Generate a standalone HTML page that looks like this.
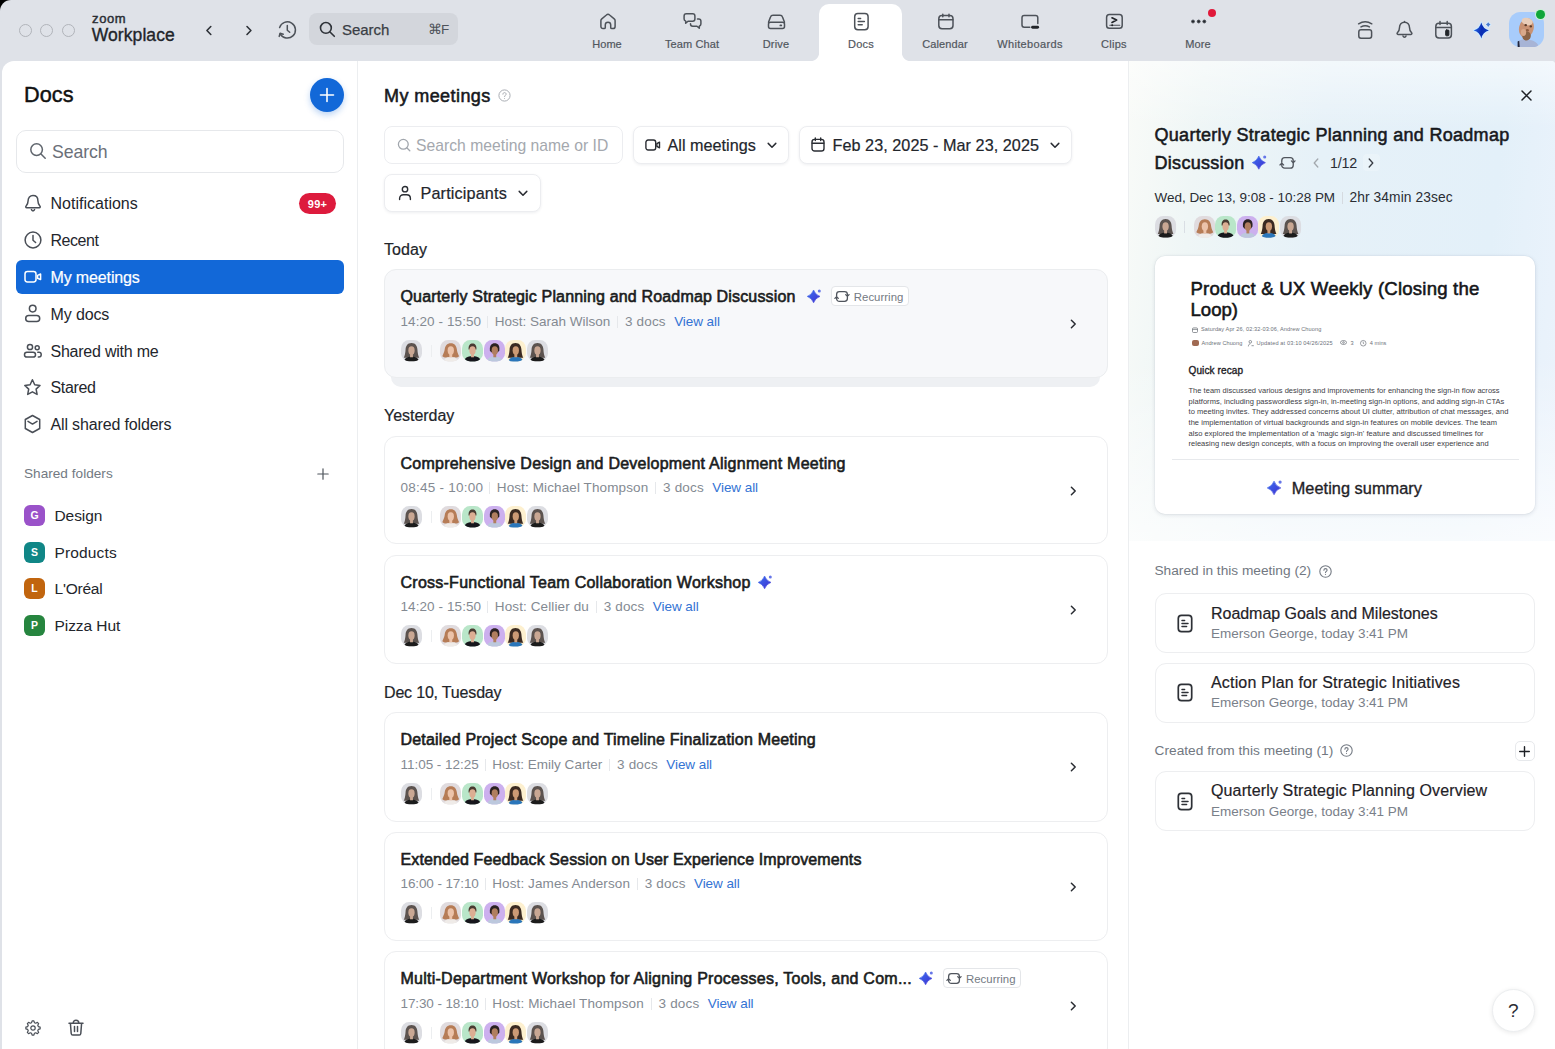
<!DOCTYPE html>
<html lang="en">
<head>
<meta charset="utf-8">
<title>Zoom Workplace - Docs</title>
<style>
*{box-sizing:border-box;margin:0;padding:0}
html,body{width:1555px;height:1049px;overflow:hidden}
body{position:relative;background:#dfe2e8;font-family:"Liberation Sans",Arial,sans-serif;color:#1b1e23;-webkit-font-smoothing:antialiased}
.a{position:absolute}
.t{position:absolute;white-space:nowrap;line-height:20px;height:20px}
svg{position:absolute;overflow:visible}
.ic{fill:none;stroke:#4a4f57;stroke-width:1.5;stroke-linecap:round;stroke-linejoin:round}
/* top bar */
#corner{left:0;top:0;width:14px;height:14px;background:#000}
#corner i{position:absolute;left:0;top:0;width:28px;height:28px;border-radius:11px;background:#dfe2e8}
.tl{width:13px;height:13px;border-radius:50%;border:1.5px solid #b1b4ba;top:23.5px}
#sbox{left:309px;top:13px;width:149px;height:32px;border-radius:8px;background:#d3d6dc}
.nav{top:37px;width:90px;text-align:center;font-size:11px;color:#51565d;-webkit-text-stroke:.2px #51565d;line-height:14px;height:14px}
#tab{left:819.2px;top:4px;width:83.2px;height:58px;background:#fff;border-radius:10px 10px 0 0}
/* content */
#content{left:2.3px;top:60.7px;width:1552.7px;height:990px;background:#fff;border-radius:12px 4px 0 0;overflow:hidden}
#side{left:0;top:0;width:355px;height:990px;border-right:1px solid #e9ebee}
#mid{left:355px;top:0;width:771px;height:990px}
#right{left:1126px;top:0;width:426px;height:990px;border-left:1px solid #e9ebee}
.si{left:50.5px;font-size:16px;color:#23262c}
.sf{left:54.5px;font-size:15.5px;color:#23262c}
.fi{left:24px;width:21px;height:21px;border-radius:6px;color:#fff;font-size:10.5px;font-weight:bold;text-align:center;line-height:21px}
.fb{height:38px;border:1px solid #ecedf0;border-radius:8px;background:#fff;box-shadow:0 1px 3px rgba(20,30,50,.07)}
.ft{font-size:16.2px;color:#23262c;-webkit-text-stroke:.2px #23262c}
.chev{fill:none;stroke:#2a2d33;stroke-width:1.5;stroke-linecap:round;stroke-linejoin:round}
.sl{left:384px;font-size:16px;color:#22252a;-webkit-text-stroke:.2px #22252a}
.card{left:384px;width:723.5px;border:1px solid #edeef0;border-radius:12px;background:#fff}
.card.sel{background:#f7f8fa;border-color:#ebedef}
.ct{left:400.5px;font-size:16px;color:#1a1c20;-webkit-text-stroke:.6px #1a1c20}
.rb{width:78px;height:20px;border:1px solid #e4e6e9;border-radius:4px;background:#fff}
.mt{left:400.5px;font-size:13.5px;color:#848a92}
.mt span,.mt b,.mt i{display:inline-block;vertical-align:top}
.mt i{width:1px;height:12px;background:#e6e8eb;margin:4px 6.3px 0 6.3px}
.mt b{font-weight:normal;color:#3373d4;margin-left:8.4px}
.mt i+span+i{margin-left:6.9px;margin-right:6.9px}
#rbg{background:linear-gradient(to bottom,rgba(255,255,255,.5) 0,rgba(255,255,255,0) 14%,rgba(255,255,255,0) 62%,rgba(255,255,255,.72) 100%),linear-gradient(96deg,#f9fbf8 0%,#eff6f6 16%,#e6f1f8 42%,#e3f0f9 80%,#ecf3fc 100%)}
.rt{left:1154.5px;font-size:18px;color:#17191d;-webkit-text-stroke:.55px #17191d}
.pt{left:1190.5px;font-size:18.6px;color:#141518;-webkit-text-stroke:.55px #141518}
.tiny{font-size:5.6px;color:#6d727a}
.para{left:1188.5px;font-size:7.5px;color:#3d4046}
.sh{left:1154.5px;font-size:13.7px;color:#727881}
.di{left:1155px;width:380px;height:60px;border:1px solid #edeef0;border-radius:11px;background:#fff}
.dt{left:1211px;font-size:16px;color:#1f2227;-webkit-text-stroke:.2px #1f2227}
.ds{left:1211px;font-size:13.5px;color:#7a8089}
.tb{stroke:#4d5259}
</style>
</head>
<body>
<svg width="0" height="0" style="left:0;top:0"><defs><filter id="avb" x="-10%" y="-10%" width="120%" height="120%"><feGaussianBlur stdDeviation=".45"/></filter><filter id="avb2" x="-20%" y="-20%" width="140%" height="140%"><feGaussianBlur stdDeviation=".7"/></filter></defs></svg>
<div class="a" id="corner"><i></i></div>
<div class="a tl" style="left:18.5px"></div><div class="a tl" style="left:40px"></div><div class="a tl" style="left:62px"></div>
<div class="t" style="letter-spacing:0.626px;left:92px;top:8.600px;font-size:13px;color:#2a2d33;-webkit-text-stroke:.45px #2a2d33">zoom</div>
<div class="t" style="letter-spacing:0.071px;left:91.800px;top:25px;font-size:17.5px;color:#22252a;-webkit-text-stroke:.35px #22252a">Workplace</div>
<div class="a" id="sbox"></div>
<div class="t" style="letter-spacing:-0.039px;left:342px;top:19.500px;font-size:15px;color:#3a3e45;-webkit-text-stroke:.25px #3a3e45">Search</div>
<div class="t" style="letter-spacing:-0.525px;left:427.500px;top:19.500px;font-size:13.500px;color:#4d5259">⌘F</div>
<div class="a" id="tab"></div>
<div class="a" style="left:811.200px;top:52.500px;width:8px;height:8px;background:radial-gradient(circle at 0 0,rgba(255,255,255,0) 7.600px,#fff 8.400px)"></div>
<div class="a" style="left:902.400px;top:52.500px;width:8px;height:8px;background:radial-gradient(circle at 100% 0,rgba(255,255,255,0) 7.600px,#fff 8.400px)"></div>
<div class="t nav" style="letter-spacing:0.039px;left:562px">Home</div>
<div class="t nav" style="letter-spacing:0.111px;left:647px">Team Chat</div>
<div class="t nav" style="letter-spacing:0.206px;left:731px">Drive</div>
<div class="t nav" style="letter-spacing:0.184px;left:816px">Docs</div>
<div class="t nav" style="letter-spacing:0.132px;left:900px">Calendar</div>
<div class="t nav" style="letter-spacing:0.349px;left:985px">Whiteboards</div>
<div class="t nav" style="letter-spacing:0.269px;left:1069px">Clips</div>
<div class="t nav" style="letter-spacing:0.109px;left:1153px">More</div>

<!-- TOPICONS -->
<svg class="ic tb" style="left:205.300px;top:24.500px" width="8" height="11" viewBox="0 0 8 11"><path d="M5.800 1.500L1.900 5.500l3.900 4" stroke="#2e3238" stroke-width="1.600"/></svg>
<svg class="ic tb" style="left:244.600px;top:24.500px" width="8" height="11" viewBox="0 0 8 11"><path d="M2 1.500L5.900 5.500 2 9.500" stroke="#2e3238" stroke-width="1.600"/></svg>
<svg class="ic tb" style="left:277px;top:20px" width="20" height="20" viewBox="0 0 20 20"><path d="M3.200 13.800A8.100 8.100 0 1 0 2.600 7.600" /><path d="M2.200 16.400l.9-3.200 3.100 1.100" /><path d="M10.300 5.600v4.600l2.400 2.100"/></svg>
<svg class="ic tb" style="left:318.500px;top:21px" width="17" height="17" viewBox="0 0 17 17"><circle cx="6.900" cy="6.900" r="5.400" stroke="#2e3238" stroke-width="1.600"/><path d="M11 11l4.300 4.300" stroke="#2e3238" stroke-width="1.600"/></svg>
<!-- nav icons -->
<svg class="ic tb" style="left:598.700px;top:13px" width="18" height="17" viewBox="0 0 18 17"><path d="M1.900 7.700c0-.8.300-1.400.9-1.900l4.600-3.800c.9-.8 2.300-.8 3.200 0l4.600 3.800c.6.500.9 1.100.9 1.900v5.800c0 1.200-.9 2.100-2.100 2.100h-1.100c-.7 0-1.200-.5-1.200-1.200v-2.600c0-1.500-1.100-2.600-2.700-2.600s-2.700 1.100-2.700 2.600v2.600c0 .7-.5 1.200-1.200 1.200h-1.100c-1.200 0-2.100-.9-2.100-2.100z"/></svg>
<svg class="ic tb" style="left:682px;top:12px" width="21" height="19" viewBox="0 0 21 19"><path d="M4.300 1.800h6.400c1.300 0 2.200.9 2.200 2.200v3c0 1.300-.9 2.200-2.200 2.200H6l-2.300 2V9.100C2.800 8.800 2.100 8 2.100 7V4c0-1.300.9-2.200 2.200-2.200z"/><path d="M15.500 6.900h1.200c1.300 0 2.200.9 2.200 2.200v3c0 1-.7 1.800-1.600 2.100v2.100l-2.300-2h-4.300c-1.300 0-2.200-.9-2.200-2.200v-.4"/></svg>
<svg class="ic tb" style="left:767.200px;top:13.500px" width="19" height="16" viewBox="0 0 19 16"><path d="M1.500 8.200l2-5.300C3.900 1.700 4.800 1.200 6 1.200h7c1.200 0 2.100.5 2.500 1.700l2 5.300"/><rect x="1.500" y="8.200" width="16" height="6.300" rx="2"/><path d="M13.400 11.400h.8" stroke-width="1.900"/></svg>
<svg class="ic tb" style="left:853px;top:12px" width="17" height="19" viewBox="0 0 17 19"><rect x="1.700" y="1.500" width="13.400" height="16.200" rx="3.200"/><path d="M5.200 6.400h2.400M5.200 9.600h6.200M5.200 12.800h4" stroke-width="1.500"/></svg>
<svg class="ic tb" style="left:936.500px;top:13px" width="18" height="17" viewBox="0 0 18 17"><rect x="1.800" y="2.600" width="14.200" height="13.200" rx="3.200"/><path d="M2 6.800h13.800M5.800 1.200v2.600M12 1.200v2.600"/></svg>
<svg class="ic tb" style="left:1020px;top:13.500px" width="20" height="16" viewBox="0 0 20 16"><path d="M9.800 13.200H4.200c-1.300 0-2.200-.9-2.200-2.200V3.800c0-1.300.9-2.200 2.200-2.200h11.400c1.300 0 2.200.9 2.200 2.200v5.800"/><path d="M12.600 13.300h5" stroke-width="2.900" stroke="#22252a"/></svg>
<svg class="ic tb" style="left:1105px;top:13px" width="19" height="17" viewBox="0 0 19 17"><rect x="1.600" y="1.600" width="15.600" height="13.600" rx="2.800"/><path d="M7 4.800l4.600 2.300L7 9.400" stroke="#22252a" stroke-width="1.700"/><path d="M4.800 12.300h10" stroke-width="1.100"/><circle cx="7.200" cy="12.300" r="1" fill="#22252a" stroke="none"/></svg>
<svg class="tb" style="left:1190px;top:18px" width="18" height="7" viewBox="0 0 18 7"><circle cx="3" cy="3.500" r="1.450" fill="#22252a"/><circle cx="8.700" cy="3.500" r="1.450" fill="#22252a"/><circle cx="14.300" cy="3.500" r="1.450" fill="#22252a"/></svg>
<div class="a" style="left:1207.500px;top:8.600px;width:8.400px;height:8.400px;border-radius:50%;background:#e0193a"></div>
<!-- right icons -->
<svg class="ic tb" style="left:1356px;top:20px" width="19" height="20" viewBox="0 0 19 20"><rect x="2.800" y="9.800" width="12.800" height="8.400" rx="2.200"/><path d="M5 6.900c2.600-1.500 5.800-1.500 8.400 0M2.600 3.800c4-2.500 9.200-2.500 13.200 0"/></svg>
<svg class="ic tb" style="left:1395px;top:20px" width="19" height="20" viewBox="0 0 19 20"><path d="M9.500 2.200c-3.100 0-5 2.200-5 5.200 0 2.600-.7 4-2.100 5.400-.6.600-.3 1.600.6 1.600h13c.9 0 1.200-1 .6-1.600-1.400-1.400-2.100-2.800-2.100-5.400 0-3-1.900-5.200-5-5.200z"/><path d="M8 15.900c.3.900.8 1.300 1.500 1.300s1.200-.4 1.500-1.300"/><path d="M9.500 1.400v.8"/></svg>
<svg class="ic tb" style="left:1433.500px;top:20px" width="19" height="20" viewBox="0 0 19 20"><rect x="1.800" y="3.200" width="15.600" height="14.800" rx="3.200"/><path d="M2 7.600h15.200M6 1.600v3M13.200 1.600v3"/><rect x="11.700" y="10" width="3.200" height="5.800" rx=".8" fill="#22252a" stroke="#22252a" stroke-width="1"/></svg>
<svg class="tb" style="left:1473px;top:22px" width="20" height="20" viewBox="0 0 20 20"><defs><linearGradient id="tsg" x1="0" y1=".4" x2="1" y2=".6"><stop offset="0" stop-color="#2a6be6"/><stop offset=".5" stop-color="#0a2db4"/><stop offset="1" stop-color="#0b3cc0"/></linearGradient></defs><path d="M8.30 0.60Q9.82 6.92 15.90 8.50Q9.82 10.08 8.30 16.40Q6.78 10.08 0.70 8.50Q6.78 6.92 8.30 0.60z" fill="#cdeaff" stroke="#cdeaff" stroke-width="2.200" stroke-linejoin="round"/><path d="M15.20 0.30Q15.94 1.86 17.50 2.60Q15.94 3.34 15.20 4.90Q14.46 3.34 12.90 2.60Q14.46 1.86 15.20 0.30z" fill="#cdeaff" stroke="#d5ecff" stroke-width="1.800" stroke-linejoin="round"/><path d="M8.30 0.60Q9.82 6.92 15.90 8.50Q9.82 10.08 8.30 16.40Q6.78 10.08 0.70 8.50Q6.78 6.92 8.30 0.60z" fill="url(#tsg)" stroke="none"/><path d="M15.20 0.30Q15.94 1.86 17.50 2.60Q15.94 3.34 15.20 4.90Q14.46 3.34 12.90 2.60Q14.46 1.86 15.20 0.30z" fill="#4a7bd0" stroke="none"/></svg>
<div class="a" style="left:1508.500px;top:12.400px;width:35px;height:35px;border-radius:11.500px;background:#a8ccfb;overflow:hidden">
 <svg style="left:0;top:0" width="35" height="35" viewBox="0 0 35 35"><g filter="url(#avb2)"><path d="M8.500 36l.4-6c2-2.200 5-3 8.500-2.500 5 .3 9 1.500 11.500 5V36z" fill="#a7b4d6"/><path d="M8.600 36V29.500l1.600-.8.600 7.300z" fill="#20253a"/><ellipse cx="17.400" cy="16" rx="7.300" ry="10" fill="#c99273" transform="rotate(14 17.400 16)"/><ellipse cx="18.200" cy="9.500" rx="5.600" ry="3.600" fill="#e8cdb9" transform="rotate(14 18.200 9.500)"/><ellipse cx="17.600" cy="24" rx="4.200" ry="4.600" fill="#8a6444" transform="rotate(14 17.600 24)"/><ellipse cx="16.700" cy="13.200" rx="1.300" ry="1.100" fill="#5a3a28"/><ellipse cx="21.800" cy="14.400" rx="1.300" ry="1.100" fill="#5a3a28"/><ellipse cx="18.300" cy="18.300" rx="1.600" ry="1.300" fill="#8d5d40"/><ellipse cx="14.500" cy="20.500" rx="2.600" ry="3.400" fill="#d9a98a"/></g></svg>
</div>
<div class="a" style="left:1535.300px;top:9.400px;width:10.800px;height:10.800px;border-radius:50%;background:#c9f2d6"></div>
<div class="a" style="left:1536.300px;top:10.400px;width:8.800px;height:8.800px;border-radius:50%;background:#10a63a"></div>
<!-- /TOPICONS -->
<div class="a" id="content">

 <div class="a" id="pg" style="left:-2.3px;top:-60.7px;width:1555px;height:1049px">
 <div class="a" style="left:357px;top:61px;width:1px;height:990px;background:#eceef0"></div>
 <div class="a" style="left:1128px;top:61px;width:1px;height:990px;background:#eceef0"></div>
 <!-- SIDEBAR -->
 <div class="t" style="letter-spacing:0.02px;left:24px;top:85px;font-size:21.7px;-webkit-text-stroke:.45px #111;color:#111">Docs</div>
 <div class="a" style="left:310px;top:78px;width:34px;height:34px;border-radius:50%;background:#1268d8;box-shadow:0 3px 6px rgba(18,104,216,.28)"></div>
 <svg style="left:319px;top:87px" width="16" height="16" viewBox="0 0 16 16"><path d="M8 1.5v13M1.5 8h13" stroke="#fff" stroke-width="1.6" stroke-linecap="round"/></svg>
 <div class="a" style="left:16px;top:130px;width:328px;height:43px;border:1px solid #e6e8eb;border-radius:10px"></div>
 <svg style="left:29px;top:142px" width="18" height="18" viewBox="0 0 18 18" class="ic"><circle cx="7.6" cy="7.6" r="5.8" stroke="#5f656d"/><path d="M12 12l4.2 4.2" stroke="#5f656d"/></svg>
 <div class="t" style="letter-spacing:-0.074px;left:52px;top:142px;font-size:17.7px;color:#6b7079">Search</div>

 <div class="a" style="left:16px;top:260px;width:328px;height:34px;border-radius:6px;background:#1268d8"></div>
 <div class="t si" style="letter-spacing:0.011px;top:194px">Notifications</div>
 <div class="t si" style="letter-spacing:-0.451px;top:231px">Recent</div>
 <div class="t si" style="letter-spacing:-0.137px;top:268px;color:#fff;-webkit-text-stroke:.2px #fff">My meetings</div>
 <div class="t si" style="letter-spacing:-0.125px;top:305px">My docs</div>
 <div class="t si" style="letter-spacing:-0.234px;top:341.5px">Shared with me</div>
 <div class="t si" style="letter-spacing:-0.357px;top:378px">Stared</div>
 <div class="t si" style="letter-spacing:-0.151px;top:415px">All shared folders</div>
 <div class="a" style="left:299px;top:193px;width:37px;height:21px;border-radius:11px;background:#dd1b3d"></div>
 <div class="t" style="left:299px;top:193.5px;width:37px;text-align:center;font-size:11px;font-weight:bold;color:#fff;letter-spacing:.2px">99+</div>
 <!-- sidebar icons -->
 <svg style="left:24px;top:194px" width="18" height="19" viewBox="0 0 18 19" class="ic"><path d="M9 1.6c-3 0-4.9 2.2-4.9 5.2 0 2.600-.7 4-2.100 5.400-.5.600-.2 1.500.7 1.500h12.600c.9 0 1.200-.9.7-1.500-1.400-1.400-2.100-2.800-2.100-5.400 0-3-1.900-5.200-4.900-5.200z"/><path d="M7.400 15.600c.3.900.9 1.300 1.600 1.300s1.300-.4 1.600-1.300"/></svg>
 <svg style="left:24px;top:231px" width="18" height="18" viewBox="0 0 18 18" class="ic"><circle cx="9" cy="9" r="7.900"/><path d="M9 4.600V9.200l2.600 2.300"/></svg>
 <svg style="left:24px;top:269px" width="18" height="16" viewBox="0 0 18 16" class="ic" ><rect x="1" y="2.500" width="11" height="10.500" rx="2.400" stroke="#fff"/><path d="M13.600 6.400l3-1.400v5.600l-3-1.400z" stroke="#fff"/></svg>
 <svg style="left:24px;top:304px" width="18" height="19" viewBox="0 0 18 19" class="ic"><circle cx="8.700" cy="4.600" r="3.300"/><rect x="1.700" y="11.400" width="14" height="6" rx="3"/></svg>
 <svg style="left:23px;top:343px" width="20" height="16" viewBox="0 0 20 16" class="ic"><circle cx="7" cy="4" r="2.600"/><rect x="1.500" y="9.300" width="11" height="4.800" rx="2.400"/><circle cx="14.200" cy="4.700" r="2"/><path d="M14.800 9.300h1.100c1.300 0 2.300 1 2.300 2.200v.2c0 1.300-1 2.300-2.300 2.300h-.6"/></svg>
 <svg style="left:23px;top:378px" width="19" height="19" viewBox="0 0 19 19" class="ic"><path d="M9.400 1.800l2.300 4.900 5.300.7-3.900 3.700 1 5.300-4.700-2.600-4.700 2.600 1-5.300L1.800 7.400l5.300-.7z"/></svg>
 <svg style="left:23px;top:414px" width="19" height="20" viewBox="0 0 19 20" class="ic"><path d="M9.500 1.500l7.200 4v9l-7.200 4-7.200-4v-9z"/><path d="M5 7.400l4.500 2.700L14 7.400"/></svg>

 <div class="t" style="letter-spacing:0.02px;left:24px;top:464.300px;font-size:13.600px;color:#727982">Shared folders</div>
 <svg style="left:316.500px;top:468px" width="12" height="12" viewBox="0 0 12 12"><path d="M6 .8v10.400M.8 6h10.400" stroke="#4f555d" stroke-width="1.200" stroke-linecap="round"/></svg>
 <div class="a fi" style="top:504.500px;background:#9a52c9">G</div>
 <div class="a fi" style="top:541.500px;background:#108686">S</div>
 <div class="a fi" style="top:578px;background:#c1650e">L</div>
 <div class="a fi" style="top:615px;background:#26853f">P</div>
 <div class="t sf" style="letter-spacing:-0.092px;top:505.700px">Design</div>
 <div class="t sf" style="letter-spacing:0.141px;top:542.700px">Products</div>
 <div class="t sf" style="letter-spacing:-0.226px;top:579.200px">L'Oréal</div>
 <div class="t sf" style="letter-spacing:-0.06px;top:616.200px">Pizza Hut</div>
 <!-- gear / trash -->
 <svg style="left:23.700px;top:1018.900px" width="18" height="18" viewBox="0 0 18 18" class="ic"><path d="M7.59 3.68L8.11 1.86L9.89 1.86L10.41 3.68L11.76 4.24L13.42 3.32L14.68 4.58L13.76 6.24L14.32 7.59L16.14 8.11L16.14 9.89L14.32 10.41L13.76 11.76L14.68 13.42L13.42 14.68L11.76 13.76L10.41 14.32L9.89 16.14L8.11 16.14L7.59 14.32L6.24 13.76L4.58 14.68L3.32 13.42L4.24 11.76L3.68 10.41L1.86 9.89L1.86 8.11L3.68 7.59L4.24 6.24L3.32 4.58L4.58 3.32L6.24 4.24z" stroke-width="1.200"/><circle cx="9" cy="9" r="2.200" stroke-width="1.200"/></svg>
 <svg style="left:68px;top:1019px" width="16" height="17" viewBox="0 0 16 17" class="ic"><path d="M1 4.200h14M2.400 4.200l.8 10.300c.1.900.7 1.500 1.600 1.500h6.400c.9 0 1.500-.6 1.600-1.500l.8-10.300M5.200 4c0-1.700 1.100-2.800 2.800-2.800s2.800 1.100 2.800 2.800M6.500 7.600v5M9.500 7.600v5"/></svg>
 <!-- MID -->
 <div class="t" style="letter-spacing:0.423px;left:384px;top:85.500px;font-size:18px;color:#16181c;-webkit-text-stroke:.55px #16181c">My meetings</div>
 <svg style="left:498px;top:88.800px" width="13" height="13" viewBox="0 0 13 13" fill="none" stroke="#a9adb3" stroke-width="1"><circle cx="6.500" cy="6.500" r="5.600"/><path d="M4.900 5.200c0-1 .7-1.600 1.600-1.600s1.600.6 1.600 1.500c0 1.300-1.600 1.300-1.600 2.500" stroke-linecap="round"/><circle cx="6.500" cy="9.400" r=".5" fill="#a9adb3" stroke="none"/></svg>
 <div class="a fb" style="left:384px;top:126px;width:239px;box-shadow:none"></div>
 <div class="a fb" style="left:633px;top:126px;width:156px"></div>
 <div class="a fb" style="left:798.500px;top:126px;width:273.500px"></div>
 <div class="a fb" style="left:384px;top:174px;width:156.500px"></div>
 <svg style="left:397px;top:138px" width="14" height="14" viewBox="0 0 14 14" fill="none" stroke="#a1a6ad" stroke-width="1.300" stroke-linecap="round"><circle cx="6.300" cy="6.300" r="4.900"/><path d="M10 10l2.800 2.800"/></svg>
 <div class="t" style="letter-spacing:0.019px;left:416px;top:135.500px;font-size:15.700px;color:#a4a8ae">Search meeting name or ID</div>
 <svg style="left:645px;top:139px" width="16" height="12" viewBox="0 0 16 12" fill="none" stroke="#2a2d33" stroke-width="1.400" stroke-linejoin="round"><rect x=".9" y="1" width="9.800" height="10" rx="2.200"/><path d="M11.900 4.600l2.600-1.400v5.600l-2.600-1.400z"/></svg>
 <div class="t ft" style="letter-spacing:0.011px;left:667.500px;top:135px">All meetings</div>
 <svg class="chev" style="left:767px;top:141.500px" width="10" height="7" viewBox="0 0 10 7"><path d="M1.200 1.400L5 5.200l3.800-3.800"/></svg>
 <svg style="left:811px;top:137px" width="14" height="15" viewBox="0 0 14 15" fill="none" stroke="#2a2d33" stroke-width="1.400" stroke-linecap="round"><rect x="1" y="2.400" width="12" height="11.600" rx="2.600"/><path d="M1.200 6.200h11.600M4.300 1v2.600M9.700 1v2.600"/></svg>
 <div class="t ft" style="letter-spacing:0.049px;left:832.500px;top:135px">Feb 23, 2025 - Mar 23, 2025</div>
 <svg class="chev" style="left:1050px;top:141.500px" width="10" height="7" viewBox="0 0 10 7"><path d="M1.200 1.400L5 5.200l3.800-3.800"/></svg>
 <svg style="left:398px;top:185px" width="14" height="16" viewBox="0 0 14 16" fill="none" stroke="#2a2d33" stroke-width="1.400" stroke-linecap="round"><circle cx="7" cy="4.200" r="2.700"/><path d="M1.600 14.600v-1.200c0-2.200 1.600-3.600 3.800-3.600h3.200c2.200 0 3.800 1.400 3.800 3.600v1.200"/></svg>
 <div class="t ft" style="letter-spacing:0.152px;left:420.500px;top:182.600px">Participants</div>
 <svg class="chev" style="left:518px;top:189.500px" width="10" height="7" viewBox="0 0 10 7"><path d="M1.200 1.400L5 5.200l3.800-3.800"/></svg>
 <div class="t sl" style="letter-spacing:0.059px;top:239.5px">Today</div>
 <div class="t sl" style="letter-spacing:-0.042px;top:405.8px">Yesterday</div>
 <div class="t sl" style="letter-spacing:-0.179px;top:682.5px">Dec 10, Tuesday</div>
 <div class="a" style="left:391px;top:360px;width:709px;height:27px;border-radius:0 0 10px 10px;background:#eef0f3"></div>
 <div class="a card sel" style="top:269px;height:108.5px"></div>
 <div class="t ct" style="letter-spacing:0.161px;top:287.0px">Quarterly Strategic Planning and Roadmap Discussion</div>
 <svg style="left:806.5px;top:288.4px" width="15" height="16" viewBox="0 0 15 16"><defs><linearGradient id="sg1" x1="0" y1="0" x2="1" y2="1"><stop offset="0" stop-color="#3a70f0"/><stop offset="1" stop-color="#3f2fd0"/></linearGradient></defs><path d="M6.60 2.00Q8.26 6.74 13.00 8.40Q8.26 10.06 6.60 14.80Q4.94 10.06 0.20 8.40Q4.94 6.74 6.60 2.00z" fill="url(#sg1)" stroke="url(#sg1)" stroke-width=".6" stroke-linejoin="round"/><circle cx="12.300" cy="2.900" r="1.500" fill="#6676e8"/></svg>
 <div class="a rb" style="left:830.5px;top:286.3px"></div>
 <svg style="left:833.9px;top:290px" width="16" height="13" viewBox="0 0 16 13" fill="none" stroke="#50555d" stroke-width="1.300" stroke-linecap="round" stroke-linejoin="round"><path d="M2.600 6V4.400C2.600 2.700 3.800 1.600 5.400 1.600h5.200c1.600 0 2.800 1.100 2.800 2.800V5.800"/><path d="M13.400 7v1.600c0 1.700-1.200 2.800-2.800 2.800H5.400c-1.600 0-2.800-1.100-2.800-2.800V7.200"/><path d="M11.700 4.600l1.700 1.700 1.700-1.700" /><path d="M.9 8.400l1.700-1.700 1.700 1.700"/></svg>
 <div class="t" style="letter-spacing:0.023px;left:853.8px;top:286.5px;font-size:11.400px;color:#747a83">Recurring</div>
 <div class="t mt" style="top:311.8px"><span style="letter-spacing:0.086px">14:20 - 15:50</span><i></i><span style="letter-spacing:-0.008px">Host: Sarah Wilson</span><i></i><span style="letter-spacing:0.17px">3 docs</span><b style="letter-spacing:-0.06px">View all</b></div>
 <svg style="left:400.8px;top:339.9px" width="21" height="21.6" viewBox="0 0 22 22" preserveAspectRatio="none"><defs><clipPath id="cp400_8_339_9"><rect width="22" height="22" rx="8.600"/></clipPath></defs><g clip-path="url(#cp400_8_339_9)"><rect width="22" height="22" fill="#dcdde2"/><g filter="url(#avb)"><path d="M11 3c-4.200 0-6 3-6.200 6.600-.2 3.600-.9 6.200-1.900 8.600h16.200c-1-2.400-1.700-5-1.900-8.600C17 6 15.200 3 11 3z" fill="#5b534f"/><path d="M3.200 22c.3-3.400 2.600-5 7.800-5s7.500 1.600 7.800 5z" fill="#1c1b1b"/><rect x="9.5" y="13" width="3" height="4.600" fill="#c9a793"/><ellipse cx="11" cy="10.600" rx="3.300" ry="4.300" fill="#c9a793"/></g></g></svg>
 <div class="a" style="left:431px;top:344.9px;width:1px;height:12px;background:#eceef0"></div>
 <svg style="left:440.0px;top:339.9px" width="21" height="21.6" viewBox="0 0 22 22" preserveAspectRatio="none"><defs><clipPath id="cp440_0_339_9"><rect width="22" height="22" rx="8.600"/></clipPath></defs><g clip-path="url(#cp440_0_339_9)"><rect width="22" height="22" fill="#e0dbde"/><g filter="url(#avb)"><path d="M11.300 3.200c-4 0-6 2.800-6.300 6-.3 3-1.600 5-2.600 7.300 1.500 1.300 3.600 1.700 5.400 1.200h7.600c1.800.5 3.400 0 4.600-1.200-1.200-2.300-2.100-4.300-2.400-7.300-.3-3.200-2.300-6-6.300-6z" fill="#b67c56"/><path d="M4 22c.3-3 2.400-4.400 7.200-4.400s6.900 1.400 7.200 4.400v4H4z" fill="#efebe8"/><rect x="9.8" y="13" width="3" height="4.600" fill="#ecc3aa"/><ellipse cx="11.3" cy="10.600" rx="3.300" ry="4.300" fill="#ecc3aa"/></g></g></svg>
 <svg style="left:461.8px;top:339.9px" width="21" height="21.6" viewBox="0 0 22 22" preserveAspectRatio="none"><defs><clipPath id="cp461_8_339_9"><rect width="22" height="22" rx="8.600"/></clipPath></defs><g clip-path="url(#cp461_8_339_9)"><rect width="22" height="22" fill="#b9e6c9"/><g filter="url(#avb)"><path d="M6.900 9.600C6.600 5.600 8.400 3.600 11 3.600s4.400 2 4.100 6z" fill="#4a3a30"/><path d="M2.400 22c.3-3.800 2.800-5.400 8.600-5.400s8.300 1.600 8.600 5.400v4H2.400z" fill="#17191b"/><rect x="9.5" y="13" width="3" height="4.600" fill="#dcae93"/><ellipse cx="11" cy="10.600" rx="3.300" ry="4.300" fill="#dcae93"/></g></g></svg>
 <svg style="left:483.5px;top:339.9px" width="21" height="21.6" viewBox="0 0 22 22" preserveAspectRatio="none"><defs><clipPath id="cp483_5_339_9"><rect width="22" height="22" rx="8.600"/></clipPath></defs><g clip-path="url(#cp483_5_339_9)"><rect width="22" height="22" fill="#ccb0ee"/><g filter="url(#avb)"><path d="M6.200 10.600C5.600 5.600 8 3.400 11.200 3.400c3.400 0 5.600 2.400 4.800 7.200l-1.400 2H7.400z" fill="#2c2220"/><path d="M3.200 22c.3-3.600 2.700-5.200 8-5.200s7.700 1.600 8 5.200v4H3.200z" fill="#bcc8dd"/><rect x="9.8" y="13" width="3" height="4.600" fill="#b07e5f"/><ellipse cx="11.3" cy="10.600" rx="3.300" ry="4.300" fill="#b07e5f"/></g></g></svg>
 <svg style="left:505.2px;top:339.9px" width="21" height="21.6" viewBox="0 0 22 22" preserveAspectRatio="none"><defs><clipPath id="cp505_2_339_9"><rect width="22" height="22" rx="8.600"/></clipPath></defs><g clip-path="url(#cp505_2_339_9)"><rect width="22" height="22" fill="#fdf0cf"/><g filter="url(#avb)"><path d="M11 3c-4.200 0-6 3-6.200 6.600-.2 3.600-.9 6.200-1.900 8.600h16.200c-1-2.400-1.700-5-1.900-8.600C17 6 15.200 3 11 3z" fill="#3a2a22"/><path d="M3.600 22c.3-3.200 2.600-4.800 7.600-4.800s7.300 1.600 7.600 4.800v4H3.600z" fill="#2b76ba"/><rect x="9.8" y="13" width="3" height="4.600" fill="#cc9a75"/><ellipse cx="11.3" cy="10.600" rx="3.300" ry="4.300" fill="#cc9a75"/></g></g></svg>
 <svg style="left:527.0px;top:339.9px" width="21" height="21.6" viewBox="0 0 22 22" preserveAspectRatio="none"><defs><clipPath id="cp527_0_339_9"><rect width="22" height="22" rx="8.600"/></clipPath></defs><g clip-path="url(#cp527_0_339_9)"><rect width="22" height="22" fill="#dcdde2"/><g filter="url(#avb)"><path d="M11 3c-4.200 0-6 3-6.200 6.600-.2 3.600-.9 6.200-1.900 8.600h16.200c-1-2.400-1.700-5-1.900-8.600C17 6 15.200 3 11 3z" fill="#5b534f"/><path d="M3.200 22c.3-3.400 2.600-5 7.800-5s7.500 1.600 7.800 5z" fill="#1c1b1b"/><rect x="9.5" y="13" width="3" height="4.600" fill="#c9a793"/><ellipse cx="11" cy="10.600" rx="3.300" ry="4.300" fill="#c9a793"/></g></g></svg>
 <svg class="chev" style="left:1069.700px;top:319.0px" width="7" height="10" viewBox="0 0 7 10"><path d="M1.400 1.200L5.200 5 1.400 8.800"/></svg>
 <div class="a card" style="top:435.5px;height:108.5px"></div>
 <div class="t ct" style="letter-spacing:0.24px;top:453.5px">Comprehensive Design and Development Alignment Meeting</div>
 <div class="t mt" style="top:478.3px"><span style="letter-spacing:0.24px">08:45 - 10:00</span><i></i><span style="letter-spacing:0.11px">Host: Michael Thompson</span><i></i><span style="letter-spacing:0.17px">3 docs</span><b style="letter-spacing:-0.06px">View all</b></div>
 <svg style="left:400.8px;top:506.4px" width="21" height="21.6" viewBox="0 0 22 22" preserveAspectRatio="none"><defs><clipPath id="cp400_8_506_4"><rect width="22" height="22" rx="8.600"/></clipPath></defs><g clip-path="url(#cp400_8_506_4)"><rect width="22" height="22" fill="#dcdde2"/><g filter="url(#avb)"><path d="M11 3c-4.200 0-6 3-6.200 6.600-.2 3.600-.9 6.200-1.900 8.600h16.200c-1-2.400-1.700-5-1.900-8.600C17 6 15.200 3 11 3z" fill="#5b534f"/><path d="M3.200 22c.3-3.400 2.600-5 7.800-5s7.500 1.600 7.800 5z" fill="#1c1b1b"/><rect x="9.5" y="13" width="3" height="4.600" fill="#c9a793"/><ellipse cx="11" cy="10.600" rx="3.300" ry="4.300" fill="#c9a793"/></g></g></svg>
 <div class="a" style="left:431px;top:511.4px;width:1px;height:12px;background:#eceef0"></div>
 <svg style="left:440.0px;top:506.4px" width="21" height="21.6" viewBox="0 0 22 22" preserveAspectRatio="none"><defs><clipPath id="cp440_0_506_4"><rect width="22" height="22" rx="8.600"/></clipPath></defs><g clip-path="url(#cp440_0_506_4)"><rect width="22" height="22" fill="#e0dbde"/><g filter="url(#avb)"><path d="M11.300 3.200c-4 0-6 2.800-6.300 6-.3 3-1.600 5-2.600 7.300 1.500 1.300 3.600 1.700 5.400 1.200h7.600c1.800.5 3.400 0 4.600-1.200-1.200-2.300-2.100-4.300-2.400-7.300-.3-3.200-2.300-6-6.300-6z" fill="#b67c56"/><path d="M4 22c.3-3 2.400-4.400 7.200-4.400s6.900 1.400 7.200 4.400v4H4z" fill="#efebe8"/><rect x="9.8" y="13" width="3" height="4.600" fill="#ecc3aa"/><ellipse cx="11.3" cy="10.600" rx="3.300" ry="4.300" fill="#ecc3aa"/></g></g></svg>
 <svg style="left:461.8px;top:506.4px" width="21" height="21.6" viewBox="0 0 22 22" preserveAspectRatio="none"><defs><clipPath id="cp461_8_506_4"><rect width="22" height="22" rx="8.600"/></clipPath></defs><g clip-path="url(#cp461_8_506_4)"><rect width="22" height="22" fill="#b9e6c9"/><g filter="url(#avb)"><path d="M6.900 9.600C6.600 5.600 8.400 3.600 11 3.600s4.400 2 4.100 6z" fill="#4a3a30"/><path d="M2.400 22c.3-3.800 2.800-5.400 8.600-5.400s8.300 1.600 8.600 5.400v4H2.400z" fill="#17191b"/><rect x="9.5" y="13" width="3" height="4.600" fill="#dcae93"/><ellipse cx="11" cy="10.600" rx="3.300" ry="4.300" fill="#dcae93"/></g></g></svg>
 <svg style="left:483.5px;top:506.4px" width="21" height="21.6" viewBox="0 0 22 22" preserveAspectRatio="none"><defs><clipPath id="cp483_5_506_4"><rect width="22" height="22" rx="8.600"/></clipPath></defs><g clip-path="url(#cp483_5_506_4)"><rect width="22" height="22" fill="#ccb0ee"/><g filter="url(#avb)"><path d="M6.200 10.600C5.600 5.600 8 3.400 11.200 3.400c3.400 0 5.600 2.400 4.800 7.200l-1.400 2H7.400z" fill="#2c2220"/><path d="M3.200 22c.3-3.600 2.700-5.200 8-5.200s7.700 1.600 8 5.200v4H3.200z" fill="#bcc8dd"/><rect x="9.8" y="13" width="3" height="4.600" fill="#b07e5f"/><ellipse cx="11.3" cy="10.600" rx="3.300" ry="4.300" fill="#b07e5f"/></g></g></svg>
 <svg style="left:505.2px;top:506.4px" width="21" height="21.6" viewBox="0 0 22 22" preserveAspectRatio="none"><defs><clipPath id="cp505_2_506_4"><rect width="22" height="22" rx="8.600"/></clipPath></defs><g clip-path="url(#cp505_2_506_4)"><rect width="22" height="22" fill="#fdf0cf"/><g filter="url(#avb)"><path d="M11 3c-4.200 0-6 3-6.200 6.600-.2 3.600-.9 6.200-1.900 8.600h16.200c-1-2.400-1.700-5-1.900-8.600C17 6 15.200 3 11 3z" fill="#3a2a22"/><path d="M3.600 22c.3-3.200 2.600-4.800 7.600-4.800s7.300 1.600 7.600 4.800v4H3.600z" fill="#2b76ba"/><rect x="9.8" y="13" width="3" height="4.600" fill="#cc9a75"/><ellipse cx="11.3" cy="10.600" rx="3.300" ry="4.300" fill="#cc9a75"/></g></g></svg>
 <svg style="left:527.0px;top:506.4px" width="21" height="21.6" viewBox="0 0 22 22" preserveAspectRatio="none"><defs><clipPath id="cp527_0_506_4"><rect width="22" height="22" rx="8.600"/></clipPath></defs><g clip-path="url(#cp527_0_506_4)"><rect width="22" height="22" fill="#dcdde2"/><g filter="url(#avb)"><path d="M11 3c-4.200 0-6 3-6.200 6.600-.2 3.600-.9 6.200-1.900 8.600h16.200c-1-2.400-1.700-5-1.900-8.600C17 6 15.200 3 11 3z" fill="#5b534f"/><path d="M3.200 22c.3-3.400 2.600-5 7.800-5s7.500 1.600 7.800 5z" fill="#1c1b1b"/><rect x="9.5" y="13" width="3" height="4.600" fill="#c9a793"/><ellipse cx="11" cy="10.600" rx="3.300" ry="4.300" fill="#c9a793"/></g></g></svg>
 <svg class="chev" style="left:1069.700px;top:485.5px" width="7" height="10" viewBox="0 0 7 10"><path d="M1.400 1.200L5.200 5 1.400 8.800"/></svg>
 <div class="a card" style="top:554.5px;height:109px"></div>
 <div class="t ct" style="letter-spacing:0.249px;top:572.5px">Cross-Functional Team Collaboration Workshop</div>
 <svg style="left:757.8px;top:573.9px" width="15" height="16" viewBox="0 0 15 16"><defs><linearGradient id="sg3" x1="0" y1="0" x2="1" y2="1"><stop offset="0" stop-color="#3a70f0"/><stop offset="1" stop-color="#3f2fd0"/></linearGradient></defs><path d="M6.60 2.00Q8.26 6.74 13.00 8.40Q8.26 10.06 6.60 14.80Q4.94 10.06 0.20 8.40Q4.94 6.74 6.60 2.00z" fill="url(#sg3)" stroke="url(#sg3)" stroke-width=".6" stroke-linejoin="round"/><circle cx="12.300" cy="2.900" r="1.500" fill="#6676e8"/></svg>
 <div class="t mt" style="top:597.3px"><span style="letter-spacing:0.086px">14:20 - 15:50</span><i></i><span style="letter-spacing:0.113px">Host: Cellier du</span><i></i><span style="letter-spacing:0.17px">3 docs</span><b style="letter-spacing:-0.06px">View all</b></div>
 <svg style="left:400.8px;top:625.4px" width="21" height="21.6" viewBox="0 0 22 22" preserveAspectRatio="none"><defs><clipPath id="cp400_8_625_4"><rect width="22" height="22" rx="8.600"/></clipPath></defs><g clip-path="url(#cp400_8_625_4)"><rect width="22" height="22" fill="#dcdde2"/><g filter="url(#avb)"><path d="M11 3c-4.200 0-6 3-6.200 6.600-.2 3.600-.9 6.200-1.900 8.600h16.200c-1-2.400-1.700-5-1.900-8.600C17 6 15.200 3 11 3z" fill="#5b534f"/><path d="M3.200 22c.3-3.400 2.600-5 7.800-5s7.500 1.600 7.800 5z" fill="#1c1b1b"/><rect x="9.5" y="13" width="3" height="4.600" fill="#c9a793"/><ellipse cx="11" cy="10.600" rx="3.300" ry="4.300" fill="#c9a793"/></g></g></svg>
 <div class="a" style="left:431px;top:630.4px;width:1px;height:12px;background:#eceef0"></div>
 <svg style="left:440.0px;top:625.4px" width="21" height="21.6" viewBox="0 0 22 22" preserveAspectRatio="none"><defs><clipPath id="cp440_0_625_4"><rect width="22" height="22" rx="8.600"/></clipPath></defs><g clip-path="url(#cp440_0_625_4)"><rect width="22" height="22" fill="#e0dbde"/><g filter="url(#avb)"><path d="M11.300 3.200c-4 0-6 2.800-6.300 6-.3 3-1.600 5-2.600 7.300 1.500 1.300 3.600 1.700 5.400 1.200h7.600c1.800.5 3.400 0 4.600-1.200-1.200-2.300-2.100-4.300-2.400-7.300-.3-3.200-2.300-6-6.300-6z" fill="#b67c56"/><path d="M4 22c.3-3 2.400-4.400 7.200-4.400s6.900 1.400 7.200 4.400v4H4z" fill="#efebe8"/><rect x="9.8" y="13" width="3" height="4.600" fill="#ecc3aa"/><ellipse cx="11.3" cy="10.600" rx="3.300" ry="4.300" fill="#ecc3aa"/></g></g></svg>
 <svg style="left:461.8px;top:625.4px" width="21" height="21.6" viewBox="0 0 22 22" preserveAspectRatio="none"><defs><clipPath id="cp461_8_625_4"><rect width="22" height="22" rx="8.600"/></clipPath></defs><g clip-path="url(#cp461_8_625_4)"><rect width="22" height="22" fill="#b9e6c9"/><g filter="url(#avb)"><path d="M6.900 9.600C6.600 5.600 8.400 3.600 11 3.600s4.400 2 4.100 6z" fill="#4a3a30"/><path d="M2.400 22c.3-3.800 2.800-5.400 8.600-5.400s8.300 1.600 8.600 5.400v4H2.400z" fill="#17191b"/><rect x="9.5" y="13" width="3" height="4.600" fill="#dcae93"/><ellipse cx="11" cy="10.600" rx="3.300" ry="4.300" fill="#dcae93"/></g></g></svg>
 <svg style="left:483.5px;top:625.4px" width="21" height="21.6" viewBox="0 0 22 22" preserveAspectRatio="none"><defs><clipPath id="cp483_5_625_4"><rect width="22" height="22" rx="8.600"/></clipPath></defs><g clip-path="url(#cp483_5_625_4)"><rect width="22" height="22" fill="#ccb0ee"/><g filter="url(#avb)"><path d="M6.200 10.600C5.600 5.600 8 3.400 11.200 3.400c3.400 0 5.600 2.400 4.800 7.200l-1.400 2H7.400z" fill="#2c2220"/><path d="M3.200 22c.3-3.600 2.700-5.200 8-5.200s7.700 1.600 8 5.200v4H3.200z" fill="#bcc8dd"/><rect x="9.8" y="13" width="3" height="4.600" fill="#b07e5f"/><ellipse cx="11.3" cy="10.600" rx="3.300" ry="4.300" fill="#b07e5f"/></g></g></svg>
 <svg style="left:505.2px;top:625.4px" width="21" height="21.6" viewBox="0 0 22 22" preserveAspectRatio="none"><defs><clipPath id="cp505_2_625_4"><rect width="22" height="22" rx="8.600"/></clipPath></defs><g clip-path="url(#cp505_2_625_4)"><rect width="22" height="22" fill="#fdf0cf"/><g filter="url(#avb)"><path d="M11 3c-4.200 0-6 3-6.200 6.600-.2 3.600-.9 6.200-1.900 8.600h16.200c-1-2.400-1.700-5-1.900-8.600C17 6 15.200 3 11 3z" fill="#3a2a22"/><path d="M3.600 22c.3-3.200 2.600-4.800 7.600-4.800s7.300 1.600 7.600 4.800v4H3.600z" fill="#2b76ba"/><rect x="9.8" y="13" width="3" height="4.600" fill="#cc9a75"/><ellipse cx="11.3" cy="10.600" rx="3.300" ry="4.300" fill="#cc9a75"/></g></g></svg>
 <svg style="left:527.0px;top:625.4px" width="21" height="21.6" viewBox="0 0 22 22" preserveAspectRatio="none"><defs><clipPath id="cp527_0_625_4"><rect width="22" height="22" rx="8.600"/></clipPath></defs><g clip-path="url(#cp527_0_625_4)"><rect width="22" height="22" fill="#dcdde2"/><g filter="url(#avb)"><path d="M11 3c-4.200 0-6 3-6.200 6.600-.2 3.600-.9 6.200-1.900 8.600h16.200c-1-2.400-1.700-5-1.900-8.600C17 6 15.200 3 11 3z" fill="#5b534f"/><path d="M3.200 22c.3-3.400 2.600-5 7.800-5s7.500 1.600 7.800 5z" fill="#1c1b1b"/><rect x="9.5" y="13" width="3" height="4.600" fill="#c9a793"/><ellipse cx="11" cy="10.600" rx="3.300" ry="4.300" fill="#c9a793"/></g></g></svg>
 <svg class="chev" style="left:1069.700px;top:604.5px" width="7" height="10" viewBox="0 0 7 10"><path d="M1.400 1.200L5.200 5 1.400 8.800"/></svg>
 <div class="a card" style="top:712px;height:109.5px"></div>
 <div class="t ct" style="letter-spacing:0.192px;top:730.0px">Detailed Project Scope and Timeline Finalization Meeting</div>
 <div class="t mt" style="top:754.8px"><span style="letter-spacing:-0.028px">11:05 - 12:25</span><i></i><span style="letter-spacing:0.026px">Host: Emily Carter</span><i></i><span style="letter-spacing:0.17px">3 docs</span><b style="letter-spacing:-0.06px">View all</b></div>
 <svg style="left:400.8px;top:782.9px" width="21" height="21.6" viewBox="0 0 22 22" preserveAspectRatio="none"><defs><clipPath id="cp400_8_782_9"><rect width="22" height="22" rx="8.600"/></clipPath></defs><g clip-path="url(#cp400_8_782_9)"><rect width="22" height="22" fill="#dcdde2"/><g filter="url(#avb)"><path d="M11 3c-4.200 0-6 3-6.200 6.600-.2 3.600-.9 6.200-1.900 8.600h16.200c-1-2.400-1.700-5-1.900-8.600C17 6 15.200 3 11 3z" fill="#5b534f"/><path d="M3.200 22c.3-3.400 2.600-5 7.800-5s7.500 1.600 7.800 5z" fill="#1c1b1b"/><rect x="9.5" y="13" width="3" height="4.600" fill="#c9a793"/><ellipse cx="11" cy="10.600" rx="3.300" ry="4.300" fill="#c9a793"/></g></g></svg>
 <div class="a" style="left:431px;top:787.9px;width:1px;height:12px;background:#eceef0"></div>
 <svg style="left:440.0px;top:782.9px" width="21" height="21.6" viewBox="0 0 22 22" preserveAspectRatio="none"><defs><clipPath id="cp440_0_782_9"><rect width="22" height="22" rx="8.600"/></clipPath></defs><g clip-path="url(#cp440_0_782_9)"><rect width="22" height="22" fill="#e0dbde"/><g filter="url(#avb)"><path d="M11.300 3.200c-4 0-6 2.800-6.300 6-.3 3-1.600 5-2.600 7.300 1.500 1.300 3.600 1.700 5.400 1.200h7.600c1.800.5 3.400 0 4.600-1.200-1.200-2.300-2.100-4.300-2.400-7.300-.3-3.200-2.300-6-6.300-6z" fill="#b67c56"/><path d="M4 22c.3-3 2.400-4.400 7.200-4.400s6.900 1.400 7.200 4.400v4H4z" fill="#efebe8"/><rect x="9.8" y="13" width="3" height="4.600" fill="#ecc3aa"/><ellipse cx="11.3" cy="10.600" rx="3.300" ry="4.300" fill="#ecc3aa"/></g></g></svg>
 <svg style="left:461.8px;top:782.9px" width="21" height="21.6" viewBox="0 0 22 22" preserveAspectRatio="none"><defs><clipPath id="cp461_8_782_9"><rect width="22" height="22" rx="8.600"/></clipPath></defs><g clip-path="url(#cp461_8_782_9)"><rect width="22" height="22" fill="#b9e6c9"/><g filter="url(#avb)"><path d="M6.900 9.600C6.600 5.600 8.400 3.600 11 3.600s4.400 2 4.100 6z" fill="#4a3a30"/><path d="M2.400 22c.3-3.800 2.800-5.400 8.600-5.400s8.300 1.600 8.600 5.400v4H2.400z" fill="#17191b"/><rect x="9.5" y="13" width="3" height="4.600" fill="#dcae93"/><ellipse cx="11" cy="10.600" rx="3.300" ry="4.300" fill="#dcae93"/></g></g></svg>
 <svg style="left:483.5px;top:782.9px" width="21" height="21.6" viewBox="0 0 22 22" preserveAspectRatio="none"><defs><clipPath id="cp483_5_782_9"><rect width="22" height="22" rx="8.600"/></clipPath></defs><g clip-path="url(#cp483_5_782_9)"><rect width="22" height="22" fill="#ccb0ee"/><g filter="url(#avb)"><path d="M6.200 10.600C5.600 5.600 8 3.400 11.200 3.400c3.400 0 5.600 2.400 4.800 7.200l-1.400 2H7.400z" fill="#2c2220"/><path d="M3.200 22c.3-3.600 2.700-5.200 8-5.200s7.700 1.600 8 5.200v4H3.200z" fill="#bcc8dd"/><rect x="9.8" y="13" width="3" height="4.600" fill="#b07e5f"/><ellipse cx="11.3" cy="10.600" rx="3.300" ry="4.300" fill="#b07e5f"/></g></g></svg>
 <svg style="left:505.2px;top:782.9px" width="21" height="21.6" viewBox="0 0 22 22" preserveAspectRatio="none"><defs><clipPath id="cp505_2_782_9"><rect width="22" height="22" rx="8.600"/></clipPath></defs><g clip-path="url(#cp505_2_782_9)"><rect width="22" height="22" fill="#fdf0cf"/><g filter="url(#avb)"><path d="M11 3c-4.200 0-6 3-6.200 6.600-.2 3.600-.9 6.200-1.900 8.600h16.200c-1-2.400-1.700-5-1.900-8.600C17 6 15.200 3 11 3z" fill="#3a2a22"/><path d="M3.600 22c.3-3.200 2.600-4.800 7.600-4.800s7.300 1.600 7.600 4.800v4H3.600z" fill="#2b76ba"/><rect x="9.8" y="13" width="3" height="4.600" fill="#cc9a75"/><ellipse cx="11.3" cy="10.600" rx="3.300" ry="4.300" fill="#cc9a75"/></g></g></svg>
 <svg style="left:527.0px;top:782.9px" width="21" height="21.6" viewBox="0 0 22 22" preserveAspectRatio="none"><defs><clipPath id="cp527_0_782_9"><rect width="22" height="22" rx="8.600"/></clipPath></defs><g clip-path="url(#cp527_0_782_9)"><rect width="22" height="22" fill="#dcdde2"/><g filter="url(#avb)"><path d="M11 3c-4.200 0-6 3-6.200 6.600-.2 3.600-.9 6.200-1.900 8.600h16.200c-1-2.400-1.700-5-1.900-8.600C17 6 15.200 3 11 3z" fill="#5b534f"/><path d="M3.200 22c.3-3.400 2.600-5 7.800-5s7.500 1.600 7.800 5z" fill="#1c1b1b"/><rect x="9.5" y="13" width="3" height="4.600" fill="#c9a793"/><ellipse cx="11" cy="10.600" rx="3.300" ry="4.300" fill="#c9a793"/></g></g></svg>
 <svg class="chev" style="left:1069.700px;top:762.0px" width="7" height="10" viewBox="0 0 7 10"><path d="M1.400 1.200L5.200 5 1.400 8.800"/></svg>
 <div class="a card" style="top:831.5px;height:109px"></div>
 <div class="t ct" style="letter-spacing:0.115px;top:849.5px">Extended Feedback Session on User Experience Improvements</div>
 <div class="t mt" style="top:874.3px"><span style="letter-spacing:-0.106px">16:00 - 17:10</span><i></i><span style="letter-spacing:0.094px">Host: James Anderson</span><i></i><span style="letter-spacing:0.17px">3 docs</span><b style="letter-spacing:-0.06px">View all</b></div>
 <svg style="left:400.8px;top:902.4px" width="21" height="21.6" viewBox="0 0 22 22" preserveAspectRatio="none"><defs><clipPath id="cp400_8_902_4"><rect width="22" height="22" rx="8.600"/></clipPath></defs><g clip-path="url(#cp400_8_902_4)"><rect width="22" height="22" fill="#dcdde2"/><g filter="url(#avb)"><path d="M11 3c-4.200 0-6 3-6.200 6.600-.2 3.600-.9 6.200-1.900 8.600h16.200c-1-2.400-1.700-5-1.900-8.600C17 6 15.200 3 11 3z" fill="#5b534f"/><path d="M3.200 22c.3-3.400 2.600-5 7.800-5s7.500 1.600 7.800 5z" fill="#1c1b1b"/><rect x="9.5" y="13" width="3" height="4.600" fill="#c9a793"/><ellipse cx="11" cy="10.600" rx="3.300" ry="4.300" fill="#c9a793"/></g></g></svg>
 <div class="a" style="left:431px;top:907.4px;width:1px;height:12px;background:#eceef0"></div>
 <svg style="left:440.0px;top:902.4px" width="21" height="21.6" viewBox="0 0 22 22" preserveAspectRatio="none"><defs><clipPath id="cp440_0_902_4"><rect width="22" height="22" rx="8.600"/></clipPath></defs><g clip-path="url(#cp440_0_902_4)"><rect width="22" height="22" fill="#e0dbde"/><g filter="url(#avb)"><path d="M11.300 3.200c-4 0-6 2.800-6.300 6-.3 3-1.600 5-2.600 7.300 1.500 1.300 3.600 1.700 5.400 1.200h7.600c1.800.5 3.400 0 4.600-1.200-1.200-2.300-2.100-4.300-2.400-7.300-.3-3.200-2.300-6-6.300-6z" fill="#b67c56"/><path d="M4 22c.3-3 2.400-4.400 7.200-4.400s6.900 1.400 7.200 4.400v4H4z" fill="#efebe8"/><rect x="9.8" y="13" width="3" height="4.600" fill="#ecc3aa"/><ellipse cx="11.3" cy="10.600" rx="3.300" ry="4.300" fill="#ecc3aa"/></g></g></svg>
 <svg style="left:461.8px;top:902.4px" width="21" height="21.6" viewBox="0 0 22 22" preserveAspectRatio="none"><defs><clipPath id="cp461_8_902_4"><rect width="22" height="22" rx="8.600"/></clipPath></defs><g clip-path="url(#cp461_8_902_4)"><rect width="22" height="22" fill="#b9e6c9"/><g filter="url(#avb)"><path d="M6.900 9.600C6.600 5.600 8.400 3.600 11 3.600s4.400 2 4.100 6z" fill="#4a3a30"/><path d="M2.400 22c.3-3.800 2.800-5.400 8.600-5.400s8.300 1.600 8.600 5.400v4H2.400z" fill="#17191b"/><rect x="9.5" y="13" width="3" height="4.600" fill="#dcae93"/><ellipse cx="11" cy="10.600" rx="3.300" ry="4.300" fill="#dcae93"/></g></g></svg>
 <svg style="left:483.5px;top:902.4px" width="21" height="21.6" viewBox="0 0 22 22" preserveAspectRatio="none"><defs><clipPath id="cp483_5_902_4"><rect width="22" height="22" rx="8.600"/></clipPath></defs><g clip-path="url(#cp483_5_902_4)"><rect width="22" height="22" fill="#ccb0ee"/><g filter="url(#avb)"><path d="M6.200 10.600C5.600 5.600 8 3.400 11.200 3.400c3.400 0 5.600 2.400 4.800 7.200l-1.400 2H7.400z" fill="#2c2220"/><path d="M3.200 22c.3-3.600 2.700-5.200 8-5.200s7.700 1.600 8 5.200v4H3.200z" fill="#bcc8dd"/><rect x="9.8" y="13" width="3" height="4.600" fill="#b07e5f"/><ellipse cx="11.3" cy="10.600" rx="3.300" ry="4.300" fill="#b07e5f"/></g></g></svg>
 <svg style="left:505.2px;top:902.4px" width="21" height="21.6" viewBox="0 0 22 22" preserveAspectRatio="none"><defs><clipPath id="cp505_2_902_4"><rect width="22" height="22" rx="8.600"/></clipPath></defs><g clip-path="url(#cp505_2_902_4)"><rect width="22" height="22" fill="#fdf0cf"/><g filter="url(#avb)"><path d="M11 3c-4.200 0-6 3-6.200 6.600-.2 3.600-.9 6.200-1.900 8.600h16.200c-1-2.400-1.700-5-1.900-8.600C17 6 15.200 3 11 3z" fill="#3a2a22"/><path d="M3.600 22c.3-3.200 2.600-4.800 7.600-4.800s7.300 1.600 7.600 4.800v4H3.600z" fill="#2b76ba"/><rect x="9.8" y="13" width="3" height="4.600" fill="#cc9a75"/><ellipse cx="11.3" cy="10.600" rx="3.300" ry="4.300" fill="#cc9a75"/></g></g></svg>
 <svg style="left:527.0px;top:902.4px" width="21" height="21.6" viewBox="0 0 22 22" preserveAspectRatio="none"><defs><clipPath id="cp527_0_902_4"><rect width="22" height="22" rx="8.600"/></clipPath></defs><g clip-path="url(#cp527_0_902_4)"><rect width="22" height="22" fill="#dcdde2"/><g filter="url(#avb)"><path d="M11 3c-4.200 0-6 3-6.200 6.600-.2 3.600-.9 6.200-1.900 8.600h16.200c-1-2.400-1.700-5-1.900-8.600C17 6 15.200 3 11 3z" fill="#5b534f"/><path d="M3.200 22c.3-3.400 2.600-5 7.800-5s7.500 1.600 7.800 5z" fill="#1c1b1b"/><rect x="9.5" y="13" width="3" height="4.600" fill="#c9a793"/><ellipse cx="11" cy="10.600" rx="3.300" ry="4.300" fill="#c9a793"/></g></g></svg>
 <svg class="chev" style="left:1069.700px;top:881.5px" width="7" height="10" viewBox="0 0 7 10"><path d="M1.400 1.200L5.200 5 1.400 8.800"/></svg>
 <div class="a card" style="top:951px;height:109px"></div>
 <div class="t ct" style="letter-spacing:0.25px;top:969.0px">Multi-Department Workshop for Aligning Processes, Tools, and Com...</div>
 <svg style="left:918.9px;top:970.4px" width="15" height="16" viewBox="0 0 15 16"><defs><linearGradient id="sg6" x1="0" y1="0" x2="1" y2="1"><stop offset="0" stop-color="#3a70f0"/><stop offset="1" stop-color="#3f2fd0"/></linearGradient></defs><path d="M6.60 2.00Q8.26 6.74 13.00 8.40Q8.26 10.06 6.60 14.80Q4.94 10.06 0.20 8.40Q4.94 6.74 6.60 2.00z" fill="url(#sg6)" stroke="url(#sg6)" stroke-width=".6" stroke-linejoin="round"/><circle cx="12.300" cy="2.900" r="1.500" fill="#6676e8"/></svg>
 <div class="a rb" style="left:942.7px;top:968.3px"></div>
 <svg style="left:946.1px;top:972px" width="16" height="13" viewBox="0 0 16 13" fill="none" stroke="#50555d" stroke-width="1.300" stroke-linecap="round" stroke-linejoin="round"><path d="M2.600 6V4.400C2.600 2.700 3.800 1.600 5.400 1.600h5.200c1.600 0 2.800 1.100 2.800 2.800V5.800"/><path d="M13.400 7v1.600c0 1.700-1.200 2.800-2.800 2.800H5.400c-1.600 0-2.800-1.100-2.800-2.800V7.200"/><path d="M11.700 4.600l1.700 1.700 1.700-1.700" /><path d="M.9 8.400l1.700-1.700 1.700 1.700"/></svg>
 <div class="t" style="letter-spacing:0.023px;left:966.0px;top:968.5px;font-size:11.400px;color:#747a83">Recurring</div>
 <div class="t mt" style="top:993.8px"><span style="letter-spacing:-0.106px">17:30 - 18:10</span><i></i><span style="letter-spacing:0.11px">Host: Michael Thompson</span><i></i><span style="letter-spacing:0.17px">3 docs</span><b style="letter-spacing:-0.06px">View all</b></div>
 <svg style="left:400.8px;top:1021.9px" width="21" height="21.6" viewBox="0 0 22 22" preserveAspectRatio="none"><defs><clipPath id="cp400_8_1021_9"><rect width="22" height="22" rx="8.600"/></clipPath></defs><g clip-path="url(#cp400_8_1021_9)"><rect width="22" height="22" fill="#dcdde2"/><g filter="url(#avb)"><path d="M11 3c-4.200 0-6 3-6.200 6.600-.2 3.600-.9 6.200-1.900 8.600h16.200c-1-2.400-1.700-5-1.900-8.600C17 6 15.200 3 11 3z" fill="#5b534f"/><path d="M3.200 22c.3-3.400 2.600-5 7.800-5s7.500 1.600 7.800 5z" fill="#1c1b1b"/><rect x="9.5" y="13" width="3" height="4.600" fill="#c9a793"/><ellipse cx="11" cy="10.600" rx="3.300" ry="4.300" fill="#c9a793"/></g></g></svg>
 <div class="a" style="left:431px;top:1026.9px;width:1px;height:12px;background:#eceef0"></div>
 <svg style="left:440.0px;top:1021.9px" width="21" height="21.6" viewBox="0 0 22 22" preserveAspectRatio="none"><defs><clipPath id="cp440_0_1021_9"><rect width="22" height="22" rx="8.600"/></clipPath></defs><g clip-path="url(#cp440_0_1021_9)"><rect width="22" height="22" fill="#e0dbde"/><g filter="url(#avb)"><path d="M11.300 3.200c-4 0-6 2.800-6.300 6-.3 3-1.600 5-2.600 7.300 1.500 1.300 3.600 1.700 5.400 1.200h7.600c1.800.5 3.400 0 4.600-1.200-1.200-2.300-2.100-4.300-2.400-7.300-.3-3.200-2.300-6-6.300-6z" fill="#b67c56"/><path d="M4 22c.3-3 2.400-4.400 7.200-4.400s6.900 1.400 7.200 4.400v4H4z" fill="#efebe8"/><rect x="9.8" y="13" width="3" height="4.600" fill="#ecc3aa"/><ellipse cx="11.3" cy="10.600" rx="3.300" ry="4.300" fill="#ecc3aa"/></g></g></svg>
 <svg style="left:461.8px;top:1021.9px" width="21" height="21.6" viewBox="0 0 22 22" preserveAspectRatio="none"><defs><clipPath id="cp461_8_1021_9"><rect width="22" height="22" rx="8.600"/></clipPath></defs><g clip-path="url(#cp461_8_1021_9)"><rect width="22" height="22" fill="#b9e6c9"/><g filter="url(#avb)"><path d="M6.900 9.600C6.600 5.600 8.400 3.600 11 3.600s4.400 2 4.100 6z" fill="#4a3a30"/><path d="M2.400 22c.3-3.800 2.800-5.400 8.600-5.400s8.300 1.600 8.600 5.400v4H2.400z" fill="#17191b"/><rect x="9.5" y="13" width="3" height="4.600" fill="#dcae93"/><ellipse cx="11" cy="10.600" rx="3.300" ry="4.300" fill="#dcae93"/></g></g></svg>
 <svg style="left:483.5px;top:1021.9px" width="21" height="21.6" viewBox="0 0 22 22" preserveAspectRatio="none"><defs><clipPath id="cp483_5_1021_9"><rect width="22" height="22" rx="8.600"/></clipPath></defs><g clip-path="url(#cp483_5_1021_9)"><rect width="22" height="22" fill="#ccb0ee"/><g filter="url(#avb)"><path d="M6.200 10.600C5.600 5.600 8 3.400 11.200 3.400c3.400 0 5.600 2.400 4.800 7.200l-1.400 2H7.400z" fill="#2c2220"/><path d="M3.200 22c.3-3.600 2.700-5.200 8-5.200s7.700 1.600 8 5.200v4H3.200z" fill="#bcc8dd"/><rect x="9.8" y="13" width="3" height="4.600" fill="#b07e5f"/><ellipse cx="11.3" cy="10.600" rx="3.300" ry="4.300" fill="#b07e5f"/></g></g></svg>
 <svg style="left:505.2px;top:1021.9px" width="21" height="21.6" viewBox="0 0 22 22" preserveAspectRatio="none"><defs><clipPath id="cp505_2_1021_9"><rect width="22" height="22" rx="8.600"/></clipPath></defs><g clip-path="url(#cp505_2_1021_9)"><rect width="22" height="22" fill="#fdf0cf"/><g filter="url(#avb)"><path d="M11 3c-4.200 0-6 3-6.200 6.600-.2 3.600-.9 6.200-1.900 8.600h16.200c-1-2.400-1.700-5-1.900-8.600C17 6 15.200 3 11 3z" fill="#3a2a22"/><path d="M3.600 22c.3-3.200 2.600-4.800 7.600-4.800s7.300 1.600 7.600 4.800v4H3.600z" fill="#2b76ba"/><rect x="9.8" y="13" width="3" height="4.600" fill="#cc9a75"/><ellipse cx="11.3" cy="10.600" rx="3.300" ry="4.300" fill="#cc9a75"/></g></g></svg>
 <svg style="left:527.0px;top:1021.9px" width="21" height="21.6" viewBox="0 0 22 22" preserveAspectRatio="none"><defs><clipPath id="cp527_0_1021_9"><rect width="22" height="22" rx="8.600"/></clipPath></defs><g clip-path="url(#cp527_0_1021_9)"><rect width="22" height="22" fill="#dcdde2"/><g filter="url(#avb)"><path d="M11 3c-4.200 0-6 3-6.200 6.600-.2 3.600-.9 6.200-1.900 8.600h16.200c-1-2.400-1.700-5-1.900-8.600C17 6 15.200 3 11 3z" fill="#5b534f"/><path d="M3.200 22c.3-3.400 2.600-5 7.800-5s7.500 1.600 7.800 5z" fill="#1c1b1b"/><rect x="9.5" y="13" width="3" height="4.600" fill="#c9a793"/><ellipse cx="11" cy="10.600" rx="3.300" ry="4.300" fill="#c9a793"/></g></g></svg>
 <svg class="chev" style="left:1069.700px;top:1001.0px" width="7" height="10" viewBox="0 0 7 10"><path d="M1.400 1.200L5.200 5 1.400 8.800"/></svg>
 <!-- RIGHT -->
 <div class="a" id="rbg" style="left:1129px;top:61px;width:426px;height:480px"></div>
 <svg style="left:1521px;top:89.500px" width="11" height="11" viewBox="0 0 11 11"><path d="M1 1l9 9M10 1l-9 9" stroke="#1d2025" stroke-width="1.500" stroke-linecap="round"/></svg>
 <div class="t rt" style="letter-spacing:0.295px;top:124.800px">Quarterly Strategic Planning and Roadmap</div>
 <div class="t rt" style="letter-spacing:0.297px;top:152.600px">Discussion</div>
 <svg style="left:1251.5px;top:154px" width="15.500" height="16.500" viewBox="0 0 15 16"><defs><linearGradient id="sg20" x1="0" y1="0" x2="1" y2="1"><stop offset="0" stop-color="#3a70f0"/><stop offset="1" stop-color="#3f2fd0"/></linearGradient></defs><path d="M6.60 2.00Q8.26 6.74 13.00 8.40Q8.26 10.06 6.60 14.80Q4.94 10.06 0.20 8.40Q4.94 6.74 6.60 2.00z" fill="url(#sg20)" stroke="url(#sg20)" stroke-width=".6" stroke-linejoin="round"/><circle cx="12.300" cy="2.900" r="1.500" fill="#6676e8"/></svg>
 <svg style="left:1279px;top:156px" width="17" height="13.800" viewBox="0 0 16 13" fill="none" stroke="#50555d" stroke-width="1.250" stroke-linecap="round" stroke-linejoin="round"><path d="M2.600 6V4.400C2.600 2.700 3.800 1.600 5.400 1.600h5.200c1.600 0 2.800 1.100 2.800 2.800V5.800"/><path d="M13.400 7v1.600c0 1.700-1.200 2.800-2.800 2.800H5.400c-1.600 0-2.800-1.100-2.800-2.800V7.200"/><path d="M11.700 4.600l1.700 1.700 1.700-1.700" /><path d="M.9 8.400l1.700-1.700 1.700 1.700"/></svg>
 <div class="a" style="left:1362.500px;top:153.500px;width:17px;height:17px;border-radius:4px;background:rgba(255,255,255,.22)"></div>
 <svg style="left:1313px;top:157.500px" width="6" height="10" viewBox="0 0 6 10" fill="none" stroke="#a3a8ae" stroke-width="1.300" stroke-linecap="round" stroke-linejoin="round"><path d="M4.800 1L1.200 5l3.600 4"/></svg>
 <div class="t" style="letter-spacing:-0.207px;left:1330px;top:152.500px;font-size:14.300px;color:#2a2d33">1/12</div>
 <svg style="left:1368px;top:157.500px" width="6" height="10" viewBox="0 0 6 10" fill="none" stroke="#3a3e45" stroke-width="1.300" stroke-linecap="round" stroke-linejoin="round"><path d="M1.200 1l3.600 4-3.600 4"/></svg>
 <div class="t" style="letter-spacing:-0.027px;left:1154.500px;top:188px;font-size:13.500px;color:#2a2d33">Wed, Dec 13, 9:08 - 10:28 PM</div>
 <div class="a" style="left:1342px;top:192px;width:1px;height:12px;background:#d5dae0"></div>
 <div class="t" style="letter-spacing:0.079px;left:1349.500px;top:188px;font-size:13.800px;color:#2a2d33">2hr 34min 23sec</div>
 <svg style="left:1154.5px;top:216.3px" width="21.2" height="21.8" viewBox="0 0 22 22" preserveAspectRatio="none"><defs><clipPath id="cp1154_5_216_3"><rect width="22" height="22" rx="8.600"/></clipPath></defs><g clip-path="url(#cp1154_5_216_3)"><rect width="22" height="22" fill="#dcdde2"/><g filter="url(#avb)"><path d="M11 3c-4.200 0-6 3-6.200 6.600-.2 3.600-.9 6.200-1.900 8.600h16.200c-1-2.400-1.700-5-1.900-8.600C17 6 15.200 3 11 3z" fill="#5b534f"/><path d="M3.200 22c.3-3.400 2.600-5 7.800-5s7.500 1.600 7.800 5z" fill="#1c1b1b"/><rect x="9.5" y="13" width="3" height="4.600" fill="#c9a793"/><ellipse cx="11" cy="10.600" rx="3.300" ry="4.300" fill="#c9a793"/></g></g></svg>
 <div class="a" style="left:1184px;top:221.3px;width:1px;height:12px;background:#d9dee4"></div>
 <svg style="left:1193.6px;top:216.3px" width="21.2" height="21.8" viewBox="0 0 22 22" preserveAspectRatio="none"><defs><clipPath id="cp1193_6_216_3"><rect width="22" height="22" rx="8.600"/></clipPath></defs><g clip-path="url(#cp1193_6_216_3)"><rect width="22" height="22" fill="#e0dbde"/><g filter="url(#avb)"><path d="M11.300 3.200c-4 0-6 2.800-6.300 6-.3 3-1.600 5-2.600 7.300 1.500 1.300 3.600 1.700 5.400 1.200h7.600c1.800.5 3.400 0 4.600-1.200-1.200-2.300-2.100-4.300-2.400-7.300-.3-3.200-2.300-6-6.300-6z" fill="#b67c56"/><path d="M4 22c.3-3 2.400-4.400 7.200-4.400s6.900 1.400 7.200 4.400v4H4z" fill="#efebe8"/><rect x="9.8" y="13" width="3" height="4.600" fill="#ecc3aa"/><ellipse cx="11.3" cy="10.600" rx="3.300" ry="4.300" fill="#ecc3aa"/></g></g></svg>
 <svg style="left:1215.2px;top:216.3px" width="21.2" height="21.8" viewBox="0 0 22 22" preserveAspectRatio="none"><defs><clipPath id="cp1215_2_216_3"><rect width="22" height="22" rx="8.600"/></clipPath></defs><g clip-path="url(#cp1215_2_216_3)"><rect width="22" height="22" fill="#b9e6c9"/><g filter="url(#avb)"><path d="M6.900 9.600C6.600 5.600 8.400 3.600 11 3.600s4.400 2 4.100 6z" fill="#4a3a30"/><path d="M2.400 22c.3-3.800 2.800-5.400 8.600-5.400s8.300 1.600 8.600 5.400v4H2.400z" fill="#17191b"/><rect x="9.5" y="13" width="3" height="4.600" fill="#dcae93"/><ellipse cx="11" cy="10.600" rx="3.300" ry="4.300" fill="#dcae93"/></g></g></svg>
 <svg style="left:1236.8px;top:216.3px" width="21.2" height="21.8" viewBox="0 0 22 22" preserveAspectRatio="none"><defs><clipPath id="cp1236_8_216_3"><rect width="22" height="22" rx="8.600"/></clipPath></defs><g clip-path="url(#cp1236_8_216_3)"><rect width="22" height="22" fill="#ccb0ee"/><g filter="url(#avb)"><path d="M6.200 10.600C5.600 5.600 8 3.400 11.200 3.400c3.400 0 5.600 2.400 4.800 7.200l-1.400 2H7.400z" fill="#2c2220"/><path d="M3.200 22c.3-3.600 2.700-5.200 8-5.200s7.700 1.600 8 5.200v4H3.200z" fill="#bcc8dd"/><rect x="9.8" y="13" width="3" height="4.600" fill="#b07e5f"/><ellipse cx="11.3" cy="10.600" rx="3.300" ry="4.300" fill="#b07e5f"/></g></g></svg>
 <svg style="left:1258.4px;top:216.3px" width="21.2" height="21.8" viewBox="0 0 22 22" preserveAspectRatio="none"><defs><clipPath id="cp1258_4_216_3"><rect width="22" height="22" rx="8.600"/></clipPath></defs><g clip-path="url(#cp1258_4_216_3)"><rect width="22" height="22" fill="#fdf0cf"/><g filter="url(#avb)"><path d="M11 3c-4.200 0-6 3-6.200 6.600-.2 3.600-.9 6.200-1.900 8.600h16.200c-1-2.400-1.700-5-1.900-8.600C17 6 15.200 3 11 3z" fill="#3a2a22"/><path d="M3.600 22c.3-3.200 2.600-4.800 7.600-4.800s7.300 1.600 7.600 4.800v4H3.600z" fill="#2b76ba"/><rect x="9.8" y="13" width="3" height="4.600" fill="#cc9a75"/><ellipse cx="11.3" cy="10.600" rx="3.300" ry="4.300" fill="#cc9a75"/></g></g></svg>
 <svg style="left:1280.0px;top:216.3px" width="21.2" height="21.8" viewBox="0 0 22 22" preserveAspectRatio="none"><defs><clipPath id="cp1280_0_216_3"><rect width="22" height="22" rx="8.600"/></clipPath></defs><g clip-path="url(#cp1280_0_216_3)"><rect width="22" height="22" fill="#dcdde2"/><g filter="url(#avb)"><path d="M11 3c-4.200 0-6 3-6.200 6.600-.2 3.600-.9 6.200-1.900 8.600h16.200c-1-2.400-1.700-5-1.900-8.600C17 6 15.200 3 11 3z" fill="#5b534f"/><path d="M3.200 22c.3-3.400 2.600-5 7.800-5s7.500 1.600 7.800 5z" fill="#1c1b1b"/><rect x="9.5" y="13" width="3" height="4.600" fill="#c9a793"/><ellipse cx="11" cy="10.600" rx="3.300" ry="4.300" fill="#c9a793"/></g></g></svg>
 <div class="a" style="left:1155px;top:256px;width:379.500px;height:258px;border-radius:10px;background:#fff;box-shadow:0 1px 4px rgba(30,50,80,.13),0 0 0 .5px rgba(30,50,80,.05)"></div>
 <div class="t pt" style="letter-spacing:0.193px;top:279px">Product &amp; UX Weekly (Closing the</div>
 <div class="t pt" style="top:299.700px">Loop)</div>
 <svg style="left:1192px;top:326.500px" width="6" height="6" viewBox="0 0 6 6" fill="none" stroke="#666b73" stroke-width=".7"><rect x=".5" y=".9" width="5" height="4.600" rx="1"/><path d="M.5 2.400h5"/></svg>
 <div class="t tiny" style="letter-spacing:0.102px;left:1201px;top:319.400px">Saturday Apr 26, 02:32-03:06, Andrew Chuong</div>
 <div class="a" style="left:1192px;top:339.500px;width:6.500px;height:6.500px;border-radius:2px;background:#a06a52"></div>
 <div class="t tiny" style="letter-spacing:0.052px;left:1201.500px;top:332.500px">Andrew Chuong</div>
 <svg style="left:1248px;top:339.500px" width="6" height="7" viewBox="0 0 6 7" fill="none" stroke="#666b73" stroke-width=".7"><circle cx="2.300" cy="1.800" r="1.300"/><path d="M.4 6.400c0-1.700.8-2.500 1.900-2.500M3.500 5.700h2.300"/></svg>
 <div class="t tiny" style="letter-spacing:0.141px;left:1256.500px;top:332.500px">Updated at 03:10 04/26/2025</div>
 <svg style="left:1339.500px;top:340px" width="7" height="5" viewBox="0 0 7 5" fill="none" stroke="#666b73" stroke-width=".7"><ellipse cx="3.500" cy="2.500" rx="3" ry="2"/><circle cx="3.500" cy="2.500" r=".8"/></svg>
 <div class="t tiny" style="left:1350.500px;top:332.500px">3</div>
 <svg style="left:1359.500px;top:339.500px" width="6.500" height="6.500" viewBox="0 0 7 7" fill="none" stroke="#666b73" stroke-width=".7"><circle cx="3.500" cy="3.500" r="3"/><path d="M3.500 1.800v1.800l1.100.8"/></svg>
 <div class="t tiny" style="letter-spacing:0.003px;left:1369.800px;top:332.500px">4 mins</div>
 <div class="t" style="letter-spacing:0.113px;left:1188.500px;top:360.500px;font-size:10px;color:#1d2025;-webkit-text-stroke:.35px #1d2025">Quick recap</div>
 <div class="t para" style="letter-spacing:0.025px;top:381.00px">The team discussed various designs and improvements for enhancing the sign-in flow across</div>
 <div class="t para" style="letter-spacing:0.045px;top:391.66px">platforms, including passwordless sign-in, in-meeting sign-in options, and adding sign-in CTAs</div>
 <div class="t para" style="letter-spacing:0.042px;top:402.32px">to meeting invites. They addressed concerns about UI clutter, attribution of chat messages, and</div>
 <div class="t para" style="letter-spacing:0.044px;top:412.98px">the implementation of virtual backgrounds and sign-in features on mobile devices. The team</div>
 <div class="t para" style="letter-spacing:0.038px;top:423.64px">also explored the implementation of a 'magic sign-in' feature and discussed timelines for</div>
 <div class="t para" style="letter-spacing:0.023px;top:434.30px">releasing new design concepts, with a focus on improving the overall user experience and</div>
 <div class="a" style="left:1171.500px;top:459px;width:347px;height:1px;background:#e7e9ec"></div>
 <svg style="left:1266.5px;top:478.8px" width="16" height="17" viewBox="0 0 15 16"><defs><linearGradient id="sg21" x1="0" y1="0" x2="1" y2="1"><stop offset="0" stop-color="#3a70f0"/><stop offset="1" stop-color="#3f2fd0"/></linearGradient></defs><path d="M6.60 2.00Q8.26 6.74 13.00 8.40Q8.26 10.06 6.60 14.80Q4.94 10.06 0.20 8.40Q4.94 6.74 6.60 2.00z" fill="url(#sg21)" stroke="url(#sg21)" stroke-width=".6" stroke-linejoin="round"/><circle cx="12.300" cy="2.900" r="1.500" fill="#6676e8"/></svg>
 <div class="t" style="letter-spacing:0.061px;left:1291.700px;top:478px;font-size:16.300px;color:#1f2227;-webkit-text-stroke:.35px #1f2227">Meeting summary</div>
 <div class="t sh" style="letter-spacing:-0.005px;top:561.300px">Shared in this meeting (2)</div>
 <svg style="left:1318.8px;top:564.8px" width="13" height="13" viewBox="0 0 13 13" fill="none" stroke="#757b84" stroke-width="1.100" stroke-linecap="round"><circle cx="6.500" cy="6.500" r="5.700"/><path d="M4.900 5.200c0-1 .7-1.600 1.600-1.600s1.600.6 1.600 1.500c0 1.300-1.600 1.300-1.600 2.500"/><circle cx="6.500" cy="9.500" r=".6" fill="#757b84" stroke="none"/></svg>
 <div class="a di" style="top:593.2px"></div>
 <svg style="left:1176.500px;top:614.0px" width="16" height="19" viewBox="0 0 16 19" fill="none" stroke="#2d3036" stroke-width="1.700" stroke-linecap="round"><rect x="1.300" y="1.300" width="13.400" height="16.300" rx="3.200"/><path d="M5 6.600h2.600M5 9.600h6M5 12.600h4.600" stroke-width="1.500"/></svg>
 <div class="t dt" style="letter-spacing:-0.035px;top:603.5px">Roadmap Goals and Milestones</div>
 <div class="t ds" style="letter-spacing:-0.009px;top:624.0px">Emerson George, today 3:41 PM</div>
 <div class="a di" style="top:662.6px"></div>
 <svg style="left:1176.500px;top:683.4px" width="16" height="19" viewBox="0 0 16 19" fill="none" stroke="#2d3036" stroke-width="1.700" stroke-linecap="round"><rect x="1.300" y="1.300" width="13.400" height="16.300" rx="3.200"/><path d="M5 6.600h2.600M5 9.600h6M5 12.600h4.600" stroke-width="1.500"/></svg>
 <div class="t dt" style="letter-spacing:0.171px;top:672.9px">Action Plan for Strategic Initiatives</div>
 <div class="t ds" style="letter-spacing:-0.009px;top:693.4px">Emerson George, today 3:41 PM</div>
 <div class="t sh" style="letter-spacing:0.027px;top:740.800px">Created from this meeting (1)</div>
 <svg style="left:1340.3px;top:744.3px" width="13" height="13" viewBox="0 0 13 13" fill="none" stroke="#757b84" stroke-width="1.100" stroke-linecap="round"><circle cx="6.500" cy="6.500" r="5.700"/><path d="M4.900 5.200c0-1 .7-1.600 1.600-1.600s1.600.6 1.600 1.500c0 1.300-1.600 1.300-1.600 2.500"/><circle cx="6.500" cy="9.500" r=".6" fill="#757b84" stroke="none"/></svg>
 <div class="a" style="left:1514.500px;top:741px;width:20px;height:20px;border:1px solid #e7e9ec;border-radius:5px;background:#fff"></div>
 <svg style="left:1519px;top:745.500px" width="11" height="11" viewBox="0 0 11 11"><path d="M5.500.7v9.600M.7 5.500h9.600" stroke="#1d2025" stroke-width="1.400" stroke-linecap="round"/></svg>
 <div class="a di" style="top:771px"></div>
 <svg style="left:1176.500px;top:791.8px" width="16" height="19" viewBox="0 0 16 19" fill="none" stroke="#2d3036" stroke-width="1.700" stroke-linecap="round"><rect x="1.300" y="1.300" width="13.400" height="16.300" rx="3.200"/><path d="M5 6.600h2.600M5 9.600h6M5 12.600h4.600" stroke-width="1.500"/></svg>
 <div class="t dt" style="letter-spacing:0.137px;top:781.3px">Quarterly Strategic Planning Overview</div>
 <div class="t ds" style="letter-spacing:-0.009px;top:801.8px">Emerson George, today 3:41 PM</div>
 <div class="a" style="left:1491.800px;top:989px;width:43px;height:43px;border-radius:50%;background:#fff;border:1px solid #eceef0;box-shadow:0 1px 5px rgba(0,0,0,.09)"></div>
 <div class="t" style="left:1491.800px;top:1001px;width:43px;text-align:center;font-size:19px;color:#2a2d33">?</div>
 </div>
</div>
</body>
</html>
